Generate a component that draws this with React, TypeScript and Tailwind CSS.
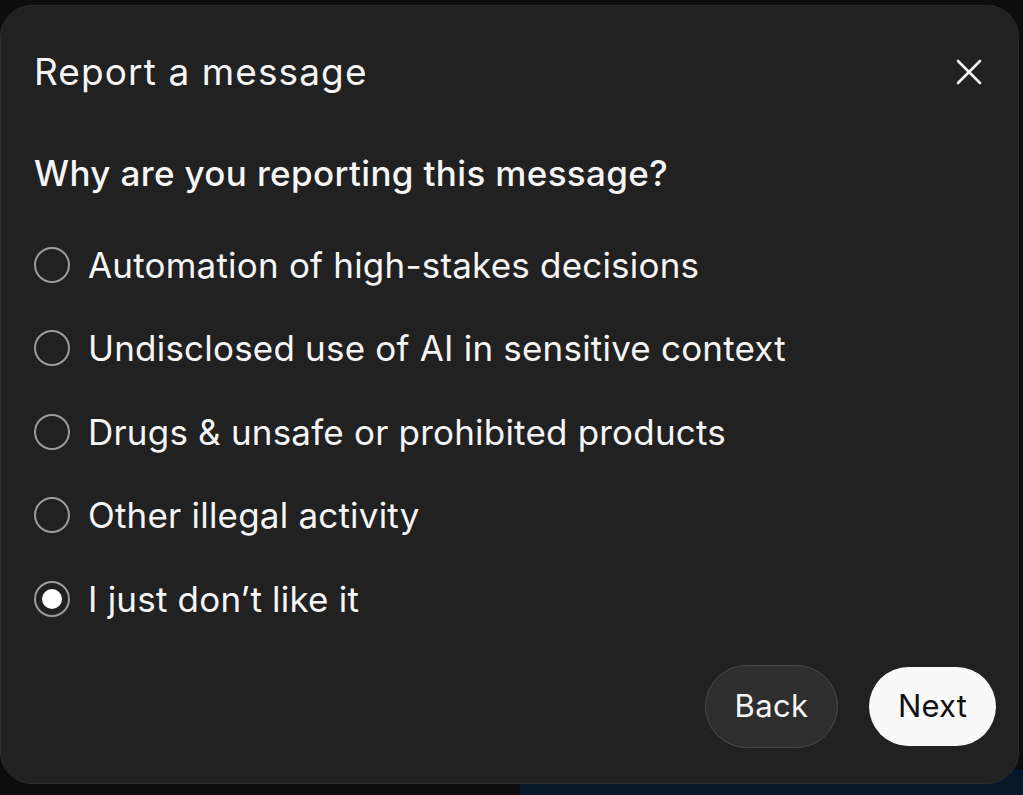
import React from "react";

const options = [
  "Automation of high-stakes decisions",
  "Undisclosed use of AI in sensitive context",
  "Drugs & unsafe or prohibited products",
  "Other illegal activity",
  "I just don\u2019t like it",
];

export default function App() {
  const selected = 4;
  return (
    <div
      className="relative h-[795px] w-[1023px] overflow-hidden bg-[#0d0d0d] text-white"
      style={{ fontFamily: "Inter, 'Noto Sans', sans-serif" }}
    >
      <div className="absolute left-[520px] top-[770px] h-[30px] w-[503px] bg-[#06162b]" />
      <div className="relative ml-0 mt-[5px] flex h-[779px] w-[1019px] flex-col rounded-[32px] border border-[#2c2c2c] bg-[#212121] pl-[33px] pr-[22px] pt-[38px]">
        <div className="flex h-[56px] items-center justify-between pr-[14px]">
          <h1 className="text-[37px] font-normal tracking-[1.1px] text-[#f5f5f5]">Report a message</h1>
          <svg width="26" height="26" viewBox="0 0 26 26" fill="none" stroke="#f2f2f2" strokeWidth="2.6" strokeLinecap="round">
            <path d="M2 2 L24 24 M24 2 L2 24" />
          </svg>
        </div>
        <div className="mt-[51px] flex h-[44px] items-center">
          <p className="text-[35px] font-medium tracking-[0.35px] text-[#f5f5f5]">Why are you reporting this message?</p>
        </div>
        <div className="mt-[28px] flex flex-col">
          {options.map((o, i) => (
            <div key={o} className="flex h-[83.5px] items-center gap-[18px]">
              <div className="flex h-[36px] w-[36px] items-center justify-center rounded-full border-2 border-[#9b9b9b]">
                {i === selected && <div className="h-[20px] w-[20px] rounded-full bg-white" />}
              </div>
              <span className="text-[35px] tracking-[0.2px] text-[#f5f5f5]">{o}</span>
            </div>
          ))}
        </div>
        <div className="mt-[24px] flex items-center justify-end gap-[31px]">
          <button className="flex h-[83px] w-[133px] items-center justify-center rounded-full border border-[#4a4a4a] bg-[#2e2e2e] text-[31px] tracking-[0.4px] text-[#f5f5f5]">
            Back
          </button>
          <button className="flex h-[79px] w-[127px] items-center justify-center rounded-full bg-[#f9f9f9] text-[31px] tracking-[0.2px] text-[#111111]">
            Next
          </button>
        </div>
      </div>
    </div>
  );
}
